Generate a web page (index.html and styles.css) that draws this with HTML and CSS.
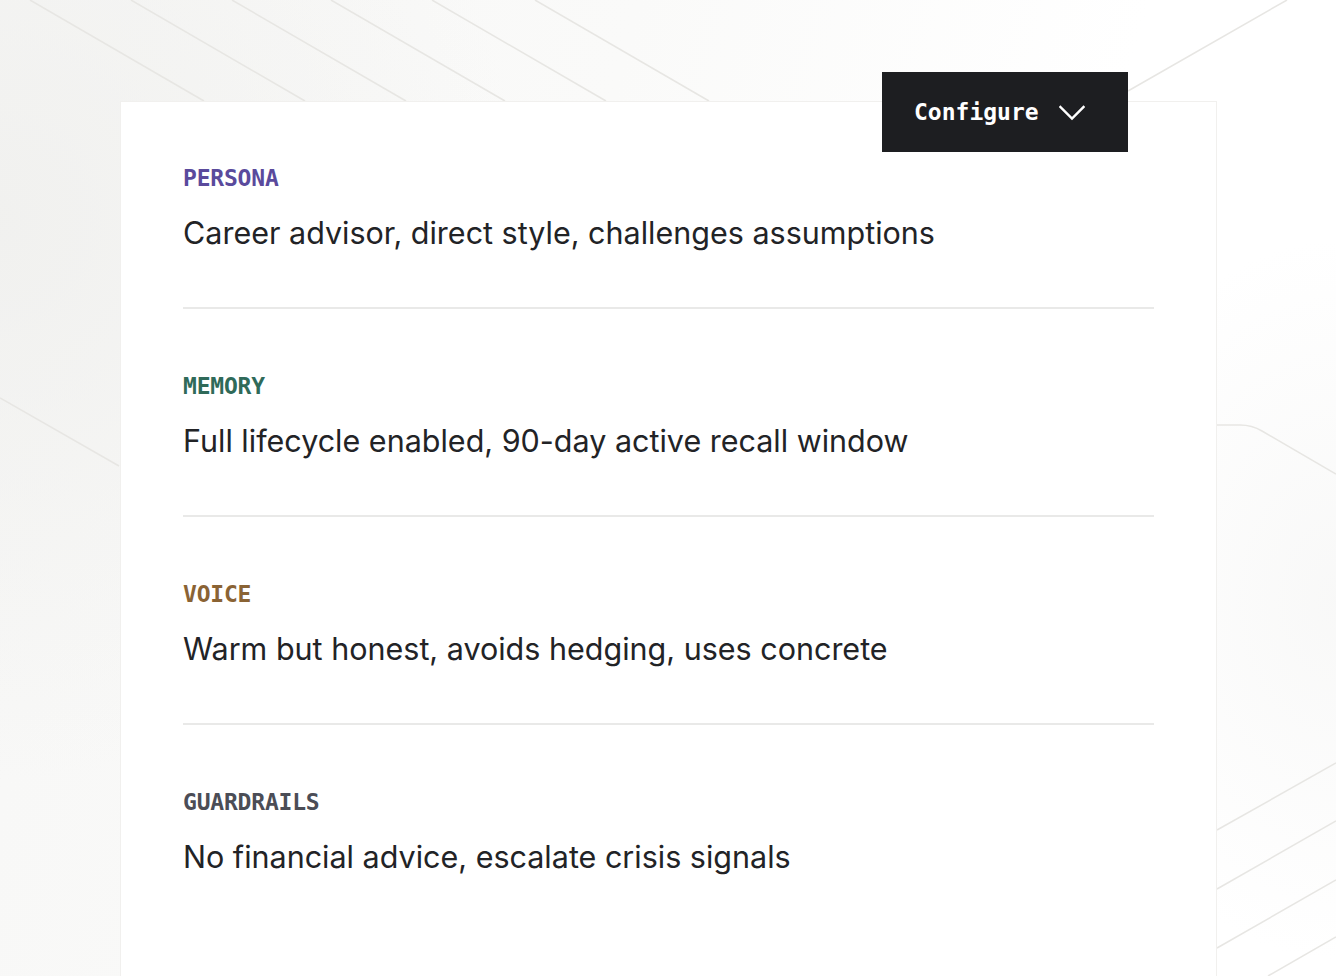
FILE: index.html
```html
<!DOCTYPE html>
<html lang="en">
<head>
<meta charset="utf-8">
<title>Configure</title>
<link rel="stylesheet" href="styles.css">
</head>
<body>
<div class="stage">
  <svg class="backdrop" width="1336" height="976" viewBox="0 0 1336 976" aria-hidden="true">
    <g stroke="#e7e6e3" stroke-width="1.5" fill="none">
      <line x1="30" y1="0" x2="204" y2="101"/>
      <line x1="131" y1="0" x2="305" y2="101"/>
      <line x1="232" y1="0" x2="406" y2="101"/>
      <line x1="331" y1="0" x2="505" y2="101"/>
      <line x1="432" y1="0" x2="606" y2="101"/>
      <line x1="535" y1="0" x2="709" y2="101"/>
      <line x1="1287" y1="0" x2="1128" y2="91"/>
      <line x1="0" y1="398" x2="119" y2="466"/>
      <path d="M1217 425 L1240 425 Q1252 425 1262 431 L1336 474"/>
      <line x1="1217" y1="830" x2="1336" y2="763"/>
      <line x1="1217" y1="889" x2="1336" y2="821"/>
      <line x1="1217" y1="948" x2="1336" y2="880"/>
      <line x1="1268" y1="976" x2="1336" y2="937"/>
    </g>
  </svg>
  <div class="card">
    <button class="configure" type="button">
      <span>Configure</span>
      <svg class="chev" width="26" height="16" viewBox="0 0 26 16"><path d="M1.5 2 L13 13.5 L24.5 2" stroke="#fff" stroke-width="2.4" fill="none" stroke-linecap="square"/></svg>
    </button>
    <section class="row">
      <div class="label persona">PERSONA</div>
      <div class="value">Career advisor, direct style, challenges assumptions</div>
    </section>
    <section class="row">
      <div class="label memory">MEMORY</div>
      <div class="value">Full lifecycle enabled, 90-day active recall window</div>
    </section>
    <section class="row">
      <div class="label voice">VOICE</div>
      <div class="value">Warm but honest, avoids hedging, uses concrete</div>
    </section>
    <section class="row last">
      <div class="label guard">GUARDRAILS</div>
      <div class="value">No financial advice, escalate crisis signals</div>
    </section>
  </div>
</div>
</body>
</html>
```
FILE: styles.css
```css
* { box-sizing: border-box; }
html, body { margin: 0; padding: 0; }
body {
  width: 1336px;
  height: 976px;
  overflow: hidden;
  background: #ffffff;
  font-family: "Inter", "Liberation Sans", sans-serif;
}
.stage {
  position: relative;
  width: 1336px;
  height: 976px;
  padding: 101px 0 0 120px;
  background:
    radial-gradient(ellipse 520px 560px at 0px 220px, rgba(240,240,238,0.9), rgba(255,255,255,0) 100%),
    radial-gradient(ellipse 260px 360px at 1336px 600px, rgba(244,244,243,0.6), rgba(255,255,255,0) 100%),
    linear-gradient(105deg, #f7f7f6 0%, #fafaf9 40%, #ffffff 72%);
}
.backdrop {
  position: absolute;
  left: 0;
  top: 0;
}
.card {
  position: relative;
  width: 1097px;
  height: 900px;
  background: #ffffff;
  border: 1px solid #f1f0ee;
  border-bottom: none;
  padding: 0 62px;
}
.configure {
  position: absolute;
  top: -30px;
  right: 88px;
  width: 246px;
  height: 80px;
  background: #1d1e21;
  border: none;
  border-radius: 0;
  color: #ffffff;
  display: flex;
  align-items: center;
  padding: 0 0 0 32px;
  gap: 20px;
  font-family: "DejaVu Sans Mono", "Liberation Mono", monospace;
  font-weight: bold;
  font-size: 23px;
  cursor: pointer;
}
.chev { display: block; margin-top: 1px; }
.row {
  padding: 63px 0 54px;
  border-bottom: 2px solid #e9e9e8;
}
.row:first-of-type { padding-top: 62px; }
.row.last { border-bottom: none; }
.label {
  font-family: "DejaVu Sans Mono", "Liberation Mono", monospace;
  font-weight: bold;
  font-size: 23px;
  line-height: 28px;
  letter-spacing: -0.2px;
}
.persona { color: #5a4a9c; }
.memory { color: #2f6a59; }
.voice { color: #8a6334; }
.guard { color: #4b4d56; }
.value {
  margin-top: 21px;
  font-size: 30.5px;
  line-height: 40px;
  color: #222326;
  letter-spacing: 0;
}
```
